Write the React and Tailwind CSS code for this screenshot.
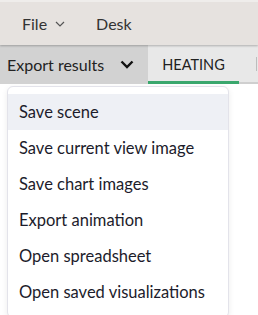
import React from 'react'

const items = [
  'Save scene',
  'Save current view image',
  'Save chart images',
  'Export animation',
  'Open spreadsheet',
  'Open saved visualizations',
]

const App = () => {
  return (
    <div className="w-[258px] h-[315px] bg-white overflow-hidden font-['Lato',sans-serif] text-[#1c1c2b]">
      {/* top menu bar */}
      <div className="h-[45px] bg-[#e6e2df] border-t-2 border-[#efedeb] shadow-[0_1px_2px_rgba(0,0,0,0.25)] relative z-10 flex items-center pl-[22px] text-[16px] text-[#333]">
        <div className="flex items-center gap-[8px]">
          <span>File</span>
          <svg width="10" height="6" viewBox="0 0 10 6" fill="none" stroke="#555" strokeWidth="1.2">
            <path d="M1 1l4 4 4-4" />
          </svg>
        </div>
        <span className="ml-[31px]">Desk</span>
      </div>

      {/* toolbar */}
      <div className="h-[39px] flex text-[16px]">
        <div className="w-[148px] bg-[#d2d2d2] flex items-center pl-[7px] text-[#222]">
          <span>Export results</span>
          <svg className="ml-[16px]" width="14" height="9" viewBox="0 0 14 9" fill="none" stroke="#111" strokeWidth="2.4">
            <path d="M1.5 1.5l5.5 5.5 5.5-5.5" />
          </svg>
        </div>
        <div className="w-[91px] bg-[#e8e8e8] border-b-[3px] border-[#3aa76d] flex items-center justify-center pt-[3px] text-[14.5px] text-[#222]">
          HEATING
        </div>
        <div className="flex-1 bg-[#e8e8e8] border-b-[2px] border-[#cfcfcf] flex items-center justify-end pr-[1px]">
          <div className="w-[1px] h-[14px] bg-[#bdbdbd]" />
        </div>
      </div>

      {/* dropdown */}
      <div className="ml-[7px] mt-[2px] w-[222px] bg-white border border-[#e3e3ea] rounded-[6px] shadow-[0_2px_6px_rgba(0,0,0,0.08)] py-[7px]">
        {items.map((item, i) => (
          <div
            key={item}
            className={`h-[36px] flex items-center pl-[11px] text-[16.5px] ${i === 0 ? 'bg-[#eef0f5]' : ''}`}
          >
            {item}
          </div>
        ))}
      </div>
    </div>
  )
}

export default App
